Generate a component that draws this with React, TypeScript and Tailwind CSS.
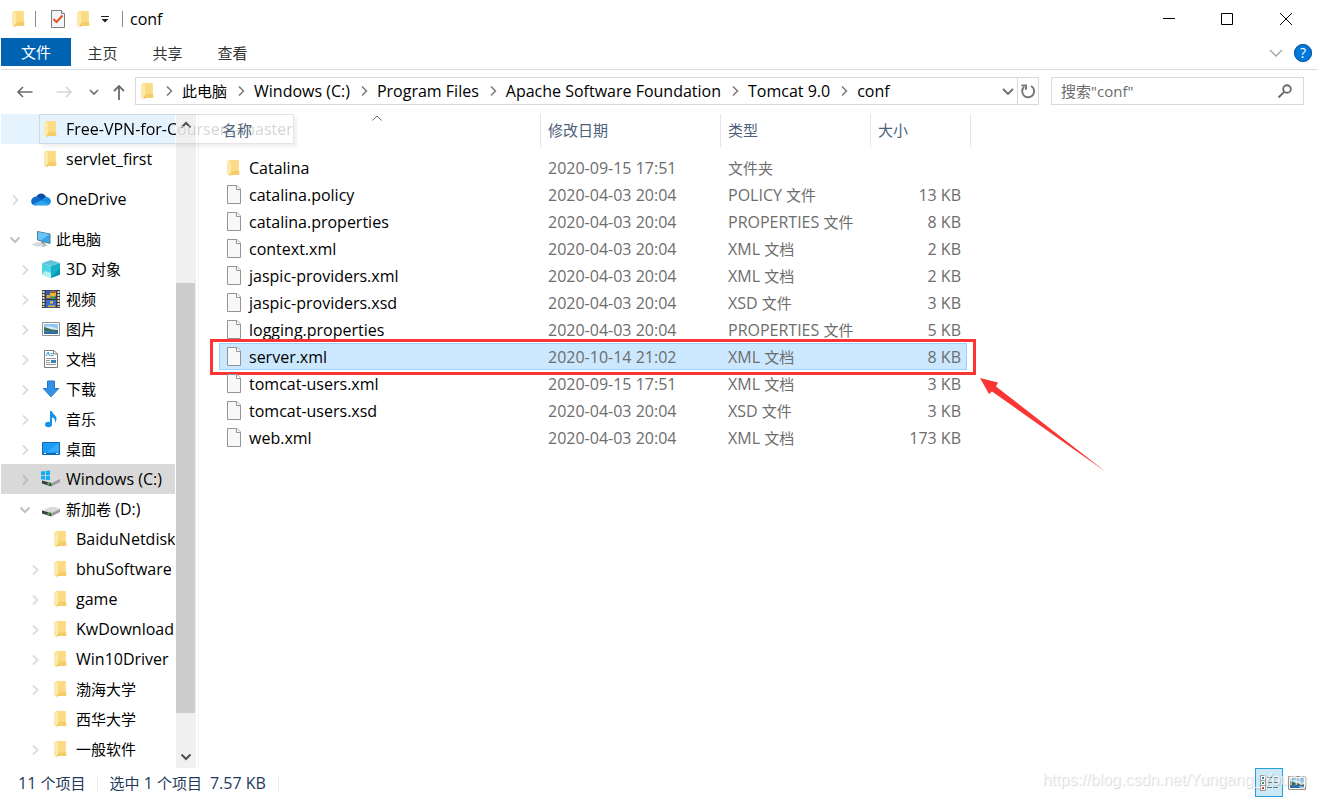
import type { ReactNode } from "react";

type TreeItem = {
  label: string;
  icon: ReactNode;
  level: 1 | 2 | 3;
  state?: "open" | "closed";
  hovered?: boolean;
  selected?: boolean;
  spaced?: boolean;
};

type FileRow = {
  name: string;
  date: string;
  type: string;
  size?: string;
  folder?: boolean;
  selected?: boolean;
};

function FolderIcon() {
  return (
    <svg width="14" height="18" viewBox="1 0 14 18" aria-hidden="true">
      <path d="M3 1h9.500v10.500l.8.6V16H3z" fill="#f5ce69" />
      <path d="M3 1h9.500v10.500H8L3 14z" fill="#fbdc84" />
      <path d="M1 1.200 5 2.700v10.800L3.600 17.500 1 15.500z" fill="#fde9ac" />
      <path d="M5 2.700v10.800l-1.400 4L5 16z" fill="#e3b654" />
    </svg>
  );
}

function FileIcon() {
  return (
    <svg width="16" height="20" viewBox="0 0 16 20" aria-hidden="true">
      <path d="M1.500.500h9.500l3.500 3.500v14.500h-13z" fill="#f8f8f8" stroke="#949494" />
      <path d="M10.500.500v4h4" fill="#fff" stroke="#949494" />
    </svg>
  );
}

function CheckDocIcon() {
  return (
    <svg width="16" height="20" viewBox="0 0 16 20" aria-hidden="true">
      <path d="M1.500 1.500h10l3 3v14h-13z" fill="#f1f5f9" stroke="#7d7d7d" />
      <path d="M11.500 1.500v3h3" fill="#fff" stroke="#7d7d7d" />
      <path d="m3.500 10 3 3 6-6.500" fill="none" stroke="#e8541c" strokeWidth="2" />
    </svg>
  );
}

function CloudIcon() {
  return (
    <svg width="20" height="14" viewBox="0 0 20 14" aria-hidden="true">
      <path d="M3 12C1 9 2 5.500 5.500 4.500 7.500.5 13 0 15.200 5L11 9z" fill="#0a4ea8" />
      <path d="M10 8.500 14 5.200c3-.8 5.500 1 6 4-.5 2.500-2 4-4 4z" fill="#1a8ee6" />
      <path d="M.2 9.500C.2 6.500 2.500 4.500 5.500 4.700 8 5 9 7 12 8.500L5 13.400C2 13.400.2 12 .2 9.500z" fill="#0f6cc9" />
      <path d="M2 12.500 10.500 8.200l8 4C17.500 13.200 17 13.500 16 13.500H5c-1.200 0-2.200-.3-3-1z" fill="#2aa5ee" />
    </svg>
  );
}

function ComputerIcon() {
  return (
    <svg width="20" height="18" viewBox="0 0 20 18" aria-hidden="true">
      <path d="M6.500 1.500 19 4v9.500L6.500 10z" fill="#3aa5ec" stroke="#4f7c99" />
      <path d="M7 2 18.500 4.300 10 10.300 7 9.500z" fill="#6cc3f8" />
      <path d="m10 11.500 4 1.200v2l-4-1.200z" fill="#8f979d" />
      <path d="m0 14.500 7-2.500 6 2-5.500 3z" fill="#d3d8dc" />
      <path d="m10 16 4-2 2.500 1-4 2z" fill="#b3babf" />
    </svg>
  );
}

function CubeIcon() {
  return (
    <svg width="20" height="20" viewBox="0 0 20 20" aria-hidden="true">
      <path d="M1 4 10 1l9 3-9 3z" fill="#63c4d8" />
      <path d="M1 4l9 3v12l-9-3.500z" fill="#52d3e3" />
      <path d="m1 15.500 3-3.500 6 2v5z" fill="#b7f1f2" />
      <path d="M19 4l-9 3v12l9-3.500z" fill="#14b1cc" />
      <path d="M19 9 10 19l9-3.500z" fill="#0793b5" />
    </svg>
  );
}

function VideoIcon() {
  return (
    <svg width="20" height="20" viewBox="0 0 20 20" aria-hidden="true">
      <path d="M1 1h18v18H1z" fill="#3d3a37" />
      <path d="M5 1.500h10V10H5z" fill="#315db8" />
      <path d="M5 11h10v7.500H5z" fill="#3a6bd0" />
      <path d="M5.500 6h4v3h-4z" fill="#e5a335" />
      <circle cx="12" cy="5" r="3" fill="#e8c22e" />
      <path d="M10 2.500h4v1.500h-4z" fill="#bb3424" />
      <path d="M10 7.500h4V10h-4z" fill="#3d9a45" />
      <path d="M9 12h3v2.500H9zM7 16.500h7V18H7z" fill="#e5b834" />
      <path d="M2.500 2v16M17.500 2v16" stroke="#e8e8e8" strokeWidth="2" strokeDasharray="2 1" />
    </svg>
  );
}

function PictureIcon() {
  return (
    <svg width="20" height="16" viewBox="0 0 20 16" aria-hidden="true">
      <path d="M1.500 1.500h17v13h-17z" fill="#fff" stroke="#929292" />
      <path d="M3 3h14v10H3z" fill="#8fc8ef" />
      <path d="M3 6c4-2 10 .5 14 2v2H3z" fill="#d7ecf7" />
      <path d="M3 6c3 0 5 3 14 3v1.500H3z" fill="#3f6c55" />
      <path d="M3 10.500 17 10v3H3z" fill="#2d6f9e" />
    </svg>
  );
}

function TextDocIcon() {
  return (
    <svg width="18" height="20" viewBox="0 0 18 20" aria-hidden="true">
      <path d="M2.500 1.500h9.500l3.500 3.500v13.500h-13z" fill="#fff" stroke="#7e7e7e" />
      <path d="M11.500 1.500V5h4" fill="none" stroke="#7e7e7e" />
      <path d="m4 7 2.200-4L7.500 7M8.500 4.500h2M8.500 6.500h3" fill="none" stroke="#2f93d0" />
      <path d="M4 9.500h10M4 11.500h4M4 13.500h4M4 15.500h10" stroke="#9a9a9a" />
      <path d="M9 11h5v3H9z" fill="#3785b5" />
    </svg>
  );
}

function DownloadIcon() {
  return (
    <svg width="18" height="18" viewBox="0 0 18 18" aria-hidden="true">
      <path d="M5.500 1h7v7.500h4.300L9 16.800 1.200 8.500h4.300z" fill="#3390e4" stroke="#2478c4" />
    </svg>
  );
}

function MusicIcon() {
  return (
    <svg width="14" height="18" viewBox="0 0 14 18" aria-hidden="true">
      <ellipse cx="4.500" cy="14.500" rx="3.500" ry="2.800" fill="#1592ea" />
      <path d="M6 1h2c0 3 4.500 4 4.500 7.500 0 1.500-.5 3-1.500 4 .5-3-1-4.500-3-5v7H6z" fill="#1592ea" />
    </svg>
  );
}

function DesktopIcon() {
  return (
    <svg width="20" height="16" viewBox="0 0 20 16" aria-hidden="true">
      <path d="M1.500 1.500h17v12h-17z" fill="#1b9bf5" stroke="#0a67b0" />
      <path d="M18 2v8L5 12z" fill="#37aaf9" />
      <path d="M2 12.500h1.500M5 12.500h11" stroke="#0a67b0" />
      <path d="M3 12.500h2M15 12.500h2" stroke="#fff" />
    </svg>
  );
}

function DriveIcon({ system = false }: { system?: boolean }) {
  return (
    <svg width="20" height="18" viewBox="0 0 20 18" aria-hidden="true">
      <path d="m1 10.500 8-3.500h5l5 2-8.500 4z" fill="#d9dadb" />
      <path d="m1 10.500 9.500 2.500v3.500L1 13.500z" fill="#3b3f3c" />
      <path d="m10.500 13 8.500-4v3l-8.500 4.500z" fill="#9b9d9f" />
      <path d="M6.500 13.200 8.500 14" stroke="#35d04a" strokeWidth="2" />
      {system && (
        <path d="M0 1.500 4 1v4H0zM4.800.9 9 .4V5H4.800zM0 5.800h4v3.900L0 9.200zM4.800 5.800H9v4.500l-4.200-.5z" fill="#15aef2" />
      )}
    </svg>
  );
}

const chevronPaths = {
  right: "m4 1.500 4.500 4.500L4 10.500",
  down: "m1.500 3.500 4.500 4.500 4.500-4.500",
  up: "M1.500 8.500 6 4l4.500 4.500",
};

function Chevron({ dir, weight = 1, className }: { dir: "right" | "down" | "up"; weight?: number; className?: string }) {
  return (
    <svg width="12" height="12" viewBox="0 0 12 12" fill="none" stroke="currentColor" strokeWidth={weight} className={className} aria-hidden="true">
      <path d={chevronPaths[dir]} />
    </svg>
  );
}

// Chinese runs are set one pixel smaller than the latin text around them
function Label({ text }: { text: string }) {
  return (
    <>
      {text.split(/([\u4e00-\u9fff]+)/).map((part, i) =>
        i % 2 ? <span key={i} className="text-[15px]">{part}</span> : part
      )}
    </>
  );
}

const tree: TreeItem[] = [
  { label: "Free-VPN-for-Coursera-master", icon: <FolderIcon />, level: 2, hovered: true },
  { label: "servlet_first", icon: <FolderIcon />, level: 2 },
  { label: "OneDrive", icon: <CloudIcon />, level: 1, state: "closed", spaced: true },
  { label: "此电脑", icon: <ComputerIcon />, level: 1, state: "open", spaced: true },
  { label: "3D 对象", icon: <CubeIcon />, level: 2, state: "closed" },
  { label: "视频", icon: <VideoIcon />, level: 2, state: "closed" },
  { label: "图片", icon: <PictureIcon />, level: 2, state: "closed" },
  { label: "文档", icon: <TextDocIcon />, level: 2, state: "closed" },
  { label: "下载", icon: <DownloadIcon />, level: 2, state: "closed" },
  { label: "音乐", icon: <MusicIcon />, level: 2, state: "closed" },
  { label: "桌面", icon: <DesktopIcon />, level: 2, state: "closed" },
  { label: "Windows (C:)", icon: <DriveIcon system />, level: 2, state: "closed", selected: true },
  { label: "新加卷 (D:)", icon: <DriveIcon />, level: 2, state: "open" },
  { label: "BaiduNetdiskDownload", icon: <FolderIcon />, level: 3 },
  { label: "bhuSoftware", icon: <FolderIcon />, level: 3, state: "closed" },
  { label: "game", icon: <FolderIcon />, level: 3, state: "closed" },
  { label: "KwDownload", icon: <FolderIcon />, level: 3, state: "closed" },
  { label: "Win10Driver", icon: <FolderIcon />, level: 3, state: "closed" },
  { label: "渤海大学", icon: <FolderIcon />, level: 3, state: "closed" },
  { label: "西华大学", icon: <FolderIcon />, level: 3 },
  { label: "一般软件", icon: <FolderIcon />, level: 3, state: "closed" },
];

const files: FileRow[] = [
  { name: "Catalina", date: "2020-09-15 17:51", type: "文件夹", folder: true },
  { name: "catalina.policy", date: "2020-04-03 20:04", type: "POLICY 文件", size: "13 KB" },
  { name: "catalina.properties", date: "2020-04-03 20:04", type: "PROPERTIES 文件", size: "8 KB" },
  { name: "context.xml", date: "2020-04-03 20:04", type: "XML 文档", size: "2 KB" },
  { name: "jaspic-providers.xml", date: "2020-04-03 20:04", type: "XML 文档", size: "2 KB" },
  { name: "jaspic-providers.xsd", date: "2020-04-03 20:04", type: "XSD 文件", size: "3 KB" },
  { name: "logging.properties", date: "2020-04-03 20:04", type: "PROPERTIES 文件", size: "5 KB" },
  { name: "server.xml", date: "2020-10-14 21:02", type: "XML 文档", size: "8 KB", selected: true },
  { name: "tomcat-users.xml", date: "2020-09-15 17:51", type: "XML 文档", size: "3 KB" },
  { name: "tomcat-users.xsd", date: "2020-04-03 20:04", type: "XSD 文件", size: "3 KB" },
  { name: "web.xml", date: "2020-04-03 20:04", type: "XML 文档", size: "173 KB" },
];

const crumbs = ["此电脑", "Windows (C:)", "Program Files", "Apache Software Foundation", "Tomcat 9.0", "conf"];

const indent = { 1: "pl-1", 2: "pl-[14px]", 3: "pl-6" };

function TitleBar() {
  return (
    <header className="flex h-[38px] shrink-0 items-center">
      <div className="flex items-center pl-[11px]">
        <FolderIcon />
        <span className="ml-[9px] h-4 w-px bg-[#8a8a8a]" />
        <button type="button" aria-label="属性" className="ml-[14px]">
          <CheckDocIcon />
        </button>
        <button type="button" aria-label="新建文件夹" className="ml-[11px]">
          <FolderIcon />
        </button>
        <button type="button" aria-label="自定义快速访问工具栏" className="ml-[9px]">
          <svg width="10" height="10" viewBox="0 0 10 10" aria-hidden="true">
            <path d="M1 2.500h8" stroke="#222" />
            <path d="M1.500 5h7L5 8.500z" fill="#222" />
          </svg>
        </button>
        <span className="ml-3 h-4 w-px bg-[#8a8a8a]" />
        <h1 className="ml-[7px]">conf</h1>
      </div>
      <div className="ml-auto flex pr-px text-black">
        <button type="button" aria-label="最小化" className="flex w-[58px] justify-center">
          <svg width="14" height="14" viewBox="0 0 14 14" aria-hidden="true">
            <path d="M1 6.500h12" stroke="currentColor" />
          </svg>
        </button>
        <button type="button" aria-label="最大化" className="flex w-[58px] justify-center">
          <svg width="14" height="14" viewBox="0 0 14 14" aria-hidden="true">
            <path d="M1.500 1.500h11v11h-11z" fill="none" stroke="currentColor" />
          </svg>
        </button>
        <button type="button" aria-label="关闭" className="flex w-[60px] justify-center">
          <svg width="14" height="14" viewBox="0 0 14 14" aria-hidden="true">
            <path d="m1 1 12 12M13 1 1 13" stroke="currentColor" />
          </svg>
        </button>
      </div>
    </header>
  );
}

function RibbonTabs() {
  return (
    <nav className="flex h-8 shrink-0 border-b border-[#dadbdc] text-[15px] text-[#333]">
      <button type="button" className="h-7 w-[70px] bg-[#0063b1] text-white">文件</button>
      {["主页", "共享", "查看"].map((tab) => (
        <button type="button" key={tab} className="h-[30px] w-[65px] pr-[2px]">{tab}</button>
      ))}
      <div className="ml-auto flex h-[30px] items-center gap-[11px] pr-[5px]">
        <button type="button" aria-label="展开功能区">
          <svg width="14" height="12" viewBox="0 0 14 12" fill="none" stroke="#a3a3a3" strokeWidth="1.300" aria-hidden="true">
            <path d="m1 3 6 6 6-6" />
          </svg>
        </button>
        <button type="button" aria-label="帮助" className="size-[18px] rounded-full bg-[#0078d7] text-sm leading-[18px] text-white outline outline-[#0a5ca3] -outline-offset-1">
          ?
        </button>
      </div>
    </nav>
  );
}

function AddressRow() {
  return (
    <div className="flex h-11 shrink-0 items-center pb-[2px] pr-[13px]">
      <div className="flex w-[134px] items-center pl-[15px] pt-[2px] text-[#6b6b6b]">
        <button type="button" aria-label="后退">
          <svg width="18" height="14" viewBox="0 0 18 14" fill="none" stroke="currentColor" strokeWidth="1.600" aria-hidden="true">
            <path d="M16.500 7H2M7 2 2 7l5 5" />
          </svg>
        </button>
        <button type="button" aria-label="前进" className="ml-[21px] text-[#d6d6d6]">
          <svg width="18" height="14" viewBox="0 0 18 14" fill="none" stroke="currentColor" strokeWidth="1.600" aria-hidden="true">
            <path d="M1.500 7H16M11 2l5 5-5 5" />
          </svg>
        </button>
        <button type="button" aria-label="最近浏览的位置" className="ml-[15px]">
          <svg width="12" height="12" viewBox="0 0 12 12" fill="none" stroke="currentColor" strokeWidth="1.600" aria-hidden="true">
            <path d="m2 4 4 4 4-4" />
          </svg>
        </button>
        <button type="button" aria-label="上移" className="ml-3">
          <svg width="14" height="18" viewBox="0 0 14 18" fill="none" stroke="currentColor" strokeWidth="1.800" aria-hidden="true">
            <path d="M7 17V3M2 8l5-5 5 5" />
          </svg>
        </button>
      </div>
      <div className="flex h-7 flex-1 items-center border border-[#d9d9d9] pl-[5px]">
        <FolderIcon />
        {crumbs.map((crumb) => (
          <span key={crumb} className="flex items-center">
            <Chevron dir="right" weight={1.5} className="ml-2 mr-[7px] text-[#7a7a7a]" />
            <button type="button" className="whitespace-nowrap"><Label text={crumb} /></button>
          </span>
        ))}
        <button type="button" aria-label="以前的位置" className="ml-auto mr-[3px] text-[#6b6b6b]">
          <svg width="12" height="12" viewBox="0 0 12 12" fill="none" stroke="currentColor" strokeWidth="1.800" aria-hidden="true">
            <path d="m1 4 5 5 5-5" />
          </svg>
        </button>
        <button type="button" aria-label="刷新" className="flex h-full w-[21px] items-center justify-center border-l border-[#d9d9d9] text-[#757575]">
          <svg width="16" height="18" viewBox="0 0 16 18" fill="none" stroke="currentColor" strokeWidth="1.900" aria-hidden="true">
            <path d="M11 4a6 6 0 1 1-7 1" />
            <path d="M1.500 3.500H6v4.300" />
          </svg>
        </button>
      </div>
      <label className="ml-3 flex h-7 w-[253px] items-center border border-[#d9d9d9] pl-[9px] pr-[10px]">
        <input
          type="text"
          aria-label="搜索"
          placeholder={'搜索"conf"'}
          className="min-w-0 flex-1 text-[15px] placeholder:text-[#6d6d6d] focus:outline-none"
        />
        <svg width="16" height="16" viewBox="0 0 16 16" fill="none" stroke="#6b6b6b" strokeWidth="1.900" aria-hidden="true">
          <circle cx="10" cy="6" r="3.800" />
          <path d="m7.200 8.800-5.700 5.700" />
        </svg>
      </label>
    </div>
  );
}

function TreeRow({ item }: { item: TreeItem }) {
  return (
    <li className={`relative ${item.spaced ? "mt-[10px]" : ""}`}>
      <button
        type="button"
        className={`flex h-[30px] w-full items-center whitespace-nowrap ${indent[item.level]} ${item.hovered ? "bg-[#e5f3ff]" : "overflow-hidden"} ${item.selected ? "bg-[#d9d9d9]" : ""}`}
      >
        <span className="flex w-5 shrink-0 justify-center pt-px">
          {item.state === "closed" && (
            <Chevron dir="right" weight={2} className={item.selected ? "text-[#bdbdbd]" : "text-[#dedede]"} />
          )}
          {item.state === "open" && <Chevron dir="down" weight={2} className="text-[#c0c0c0]" />}
        </span>
        <span className="ml-[6px] flex w-5 shrink-0 justify-center">{item.icon}</span>
        {item.hovered ? (
          <span className="relative z-10 ml-[5px] bg-[linear-gradient(to_right,#000_110px,#d3d3d3_110px)] bg-clip-text text-transparent">
            {item.label}
          </span>
        ) : (
          <span className="ml-[5px]"><Label text={item.label} /></span>
        )}
      </button>
      {item.hovered && (
        <span className="pointer-events-none absolute left-[38px] top-0 z-10 h-[30px] w-[255px] border border-black/10 shadow-[3px_3px_3px_rgba(0,0,0,0.06)]" />
      )}
    </li>
  );
}

function Sidebar() {
  return (
    <aside className="flex w-[198px] shrink-0 border-r border-[#f3f3f3]">
      <ul className="w-[174px] shrink-0">
        {tree.map((item) => <TreeRow key={item.label} item={item} />)}
      </ul>
      <div className="ml-px flex w-5 flex-col items-center bg-[#f0f0f0] pr-px text-[#505050]">
        <Chevron dir="up" weight={2} className="mt-[5px] shrink-0" />
        <div className="mt-[152px] h-[430px] w-full shrink-0 bg-[#cdcdcd]" />
        <Chevron dir="down" weight={2} className="mb-[5px] mt-auto shrink-0" />
      </div>
    </aside>
  );
}

function Annotation() {
  return (
    <span className="pointer-events-none">
      <span className="absolute -left-[10px] -top-[5px] h-9 w-[766px] border-[3px] border-[#fa3533]" />
      <svg width="128" height="96" viewBox="0 0 128 96" className="absolute left-[760px] top-[34px]" aria-hidden="true">
        <path d="m0 0 18 4.500-2 4L126 94 12 13.500 9 16z" fill="#fa3533" />
      </svg>
    </span>
  );
}

function FileTable() {
  const cell = "h-[27px] border-y p-0";
  return (
    <main className="min-w-0 flex-1 pl-5">
      <table className="w-[752px] table-fixed border-separate border-spacing-0 text-left text-[#6d6d6d]">
        <colgroup>
          <col className="w-[322px]" />
          <col className="w-[180px]" />
          <col className="w-[150px]" />
          <col className="w-24" />
          <col className="w-1" />
        </colgroup>
        <thead>
          <tr className="h-[33px] text-[15px] text-[#4c607a]">
            <th className="relative z-10 border-r border-[#e5e5e5] p-0 pb-[2px] pl-[3px] font-normal">
              名称
              <Chevron dir="up" className="absolute left-[152px] -top-[2px] text-[#6b6b6b]" />
            </th>
            <th className="border-r border-[#e5e5e5] p-0 pb-[2px] pl-[7px] font-normal">修改日期</th>
            <th className="border-r border-[#e5e5e5] p-0 pb-[2px] pl-[7px] font-normal">类型</th>
            <th className="p-0 pb-[2px] pl-[7px] font-normal">大小</th>
            <td className="border-r border-[#e5e5e5] p-0" />
          </tr>
        </thead>
        <tbody className="before:block before:h-[7px]">
          {files.map((file) => {
            const tone = file.selected ? "border-[#99d1ff] bg-[#cce8ff]" : "border-transparent";
            return (
              <tr key={file.name}>
                <td className={`${cell} ${tone} relative border-l text-black`}>
                  <span className="flex items-center pl-[6px]">
                    <span className="flex w-4 justify-center">{file.folder ? <FolderIcon /> : <FileIcon />}</span>
                    <span className="ml-[7px]">{file.name}</span>
                  </span>
                  {file.selected && <Annotation />}
                </td>
                <td className={`${cell} ${tone} pl-[7px]`}>{file.date}</td>
                <td className={`${cell} ${tone} pl-[7px]`}><Label text={file.type} /></td>
                <td className={`${cell} ${tone} border-r pr-[5px] text-right`}>{file.size}</td>
              </tr>
            );
          })}
        </tbody>
      </table>
    </main>
  );
}

function StatusBar() {
  return (
    <footer className="relative flex h-[30px] shrink-0 items-center pb-px pl-[17px] text-[#1e395b]">
      <span><Label text="11 个项目" /></span>
      <span className="ml-3 h-4 w-px bg-[#ececec]" />
      <span className="ml-[11px]"><Label text="选中 1 个项目" /></span>
      <span className="ml-2">7.57 KB</span>
      <span className="ml-3 h-4 w-px bg-[#ececec]" />
      <div className="ml-auto flex items-center gap-1 pr-[10px]">
        <button type="button" aria-label="详细信息" className="flex h-[29px] w-7 items-center justify-center border border-[#26a0da] bg-[#cbe8f6]">
          <svg width="20" height="18" viewBox="0 0 20 18" aria-hidden="true">
            <path d="M1.500 1.500h5v5h-5zM1.500 6.500h5v5h-5zM1.500 11.500h5v5h-5z" fill="#fff" stroke="#9a9a9a" />
            <path d="M3 3h2v2H3z" fill="#2f7fc4" />
            <path d="M3 8h2v2H3z" fill="#3c8f6a" />
            <path d="M3 13h2v2H3z" fill="#c8371f" />
            <path d="M8 3.500h5M14 3.500h5M8 8.500h5M14 8.500h5M8 13.500h5M14 13.500h5" stroke="#777" />
          </svg>
        </button>
        <button type="button" aria-label="大缩略图">
          <PictureIcon />
        </button>
      </div>
      <span className="pointer-events-none absolute right-[10px] top-0 font-['Liberation_Sans',sans-serif] text-base text-white/70 [text-shadow:1px_1px_1px_rgba(0,0,0,0.16)]">
        https://blog.csdn.net/Yungang_Young
      </span>
    </footer>
  );
}

export default function App() {
  return (
    <div className="flex min-h-screen flex-col overflow-x-hidden bg-white pl-px font-['Open_Sans','Noto_Sans_CJK_SC',sans-serif] text-base leading-5 text-black">
      <TitleBar />
      <RibbonTabs />
      <AddressRow />
      <div className="flex flex-1">
        <Sidebar />
        <FileTable />
      </div>
      <StatusBar />
    </div>
  );
}
